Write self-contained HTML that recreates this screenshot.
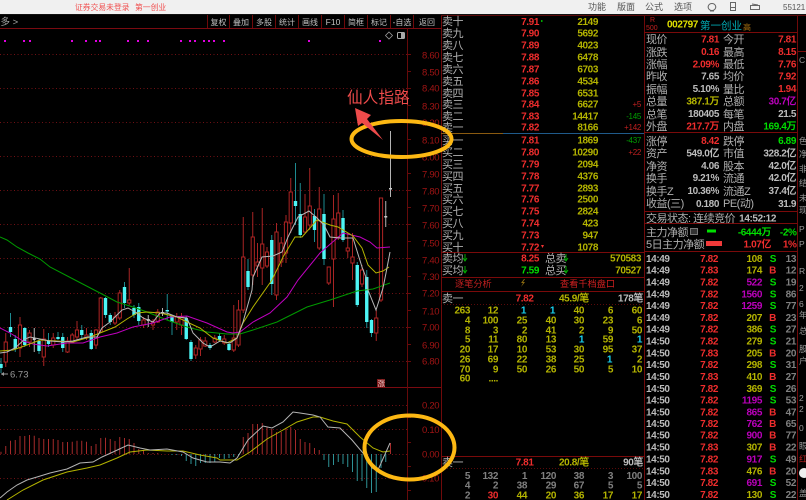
<!DOCTYPE html>
<html><head><meta charset="utf-8"><title>第一创业</title>
<style>
html,body{margin:0;padding:0;background:#000;width:806px;height:500px;overflow:hidden}
svg{display:block;filter:blur(.3px)}
text{font-family:"Liberation Sans","Noto Sans CJK SC",sans-serif}
.l{font-size:11px;fill:#b0b0b0;letter-spacing:-.5px}
.n{font-size:10px;font-weight:bold;letter-spacing:-.4px;text-anchor:end}
.s{text-anchor:start}
.ax{font-size:9.5px;fill:#a01414;letter-spacing:-.3px}
.r{fill:#ef2d2d}.y{fill:#b4b400}.w{fill:#bcbcbc}.g{fill:#00dd00}.p{fill:#bb00bb}.c{fill:#19cfee}.d{fill:#808080}
.t{font-size:8px;fill:#c0c0c0;text-anchor:middle}
.q{font-size:9px;fill:#555}
.de{font-size:8px;text-anchor:end;letter-spacing:-.3px}
.e{font-size:8.5px;fill:#999}
</style></head><body>
<svg width="806" height="500" viewBox="0 0 806 500" xmlns="http://www.w3.org/2000/svg">
<rect width="806" height="500" fill="#000"/>
<rect width="806" height="14" fill="#f0f0f0"/>
<text x="75" y="10" font-size="7.8" fill="#f05252">证券交易未登录</text>
<text x="135" y="10" font-size="7.8" fill="#f05252">第一创业</text>
<text x="588" y="10" class="q">功能</text><text x="617" y="10" class="q">版面</text><text x="645" y="10" class="q">公式</text><text x="674" y="10" class="q">选项</text>
<path d="M712 3.5a3.8 3.5 0 1 1-.1 0zM710 11h4" fill="none" stroke="#666"/>
<path d="M730.5 2.500h5v8h-5zM730.5 7.500h5" fill="none" stroke="#666"/>
<path d="M750.5 5.500h9v4h-9zM752 4l6 1" fill="none" stroke="#666"/>
<text x="783" y="10" font-size="8" fill="#555">55121</text>

<!-- frame lines -->
<path d="M0 14.500H806" stroke="#111"/>
<path d="M0 28.500H441M0 387.500H441" stroke="#7a0a10"/>
<path d="M207.500 15V28M229.500 15V28M252.500 15V28M275.500 15V28M298.500 15V28M321.500 15V28M344.500 15V28M367.500 15V28M390.500 15V28M413.500 15V28" stroke="#6e0a0a"/>
<text x="-9" y="25" font-size="9.500" fill="#aaa">型多 &gt;</text>
<g><text x="218.500" y="25" class="t">复权</text><text x="241" y="25" class="t">叠加</text><text x="264" y="25" class="t">多股</text><text x="287" y="25" class="t">统计</text><text x="310" y="25" class="t">画线</text><text x="333" y="25" class="t" style="font-size:8.5px">F10</text><text x="356" y="25" class="t">简框</text><text x="379" y="25" class="t">标记</text><text x="402" y="25" class="t">-自选</text><text x="427" y="25" class="t">返回</text></g>

<!-- chart grid -->
<path d="M0 54.500H407M0 88.500H407M0 122.500H407M0 156.500H407M0 190.500H407M0 224.500H407M0 258.500H407M0 293.500H407M0 327.500H407M0 361.500H407M0 405.500H407M0 429.500H407M0 454.500H407M0 478.500H407" stroke="#701014" stroke-dasharray="1 2.500" fill="none"/>
<path d="M407.500 28V500" stroke="#660a0a"/>
<path d="M408 54.500h3M408 71.500h3M408 88.500h3M408 105.500h3M408 122.500h3M408 139.500h3M408 156.500h3M408 173.500h3M408 190.500h3M408 207.500h3M408 224.500h3M408 241.500h3M408 258.500h3M408 276.500h3M408 293.500h3M408 310.500h3M408 327.500h3M408 344.500h3M408 361.500h3M408 417.500h3M408 442.500h3M408 466.500h3M408 490.500h3" stroke="#660a0a"/>
<g class="ax">
<text x="422" y="58.500">8.60</text><text x="422" y="75.500">8.50</text><text x="422" y="91.500">8.40</text><text x="422" y="109.500">8.30</text><text x="422" y="126">8.20</text><text x="422" y="143.500">8.10</text><text x="422" y="160.500">8.00</text><text x="422" y="177.500">7.90</text><text x="422" y="194.500">7.80</text><text x="422" y="211.500">7.70</text><text x="422" y="228.500">7.60</text><text x="422" y="246.500">7.50</text><text x="422" y="263.500">7.40</text><text x="422" y="280">7.30</text><text x="422" y="296.500">7.20</text><text x="422" y="314.500">7.10</text><text x="422" y="330.500">7.00</text><text x="422" y="348.500">6.90</text><text x="422" y="364.500">6.80</text>
<text x="422" y="408.500">0.20</text><text x="422" y="433">0.10</text><text x="422" y="457.500">0.00</text><text x="419" y="481.500">-0.10</text>
</g>

<!-- signal dots -->
<path d="M4 40h2v2h-2zM23 40h2v2h-2zM29 40h2v2h-2zM71 40h2v2h-2zM85 40h2v2h-2zM95 40h2v2h-2zM99 40h2v2h-2zM127 40h2v2h-2zM137 40h2v2h-2zM147 40h2v2h-2zM180 40h2v2h-2zM189 40h2v2h-2zM194 40h2v2h-2zM203 40h2v2h-2zM208 40h2v2h-2zM213 40h2v2h-2zM223 40h2v2h-2zM308 40h2v2h-2zM379 40h2v2h-2z" fill="#e000e0"/>
<path d="M389 32l3.500 3.500-3.500 3.500-3.500-3.500z" fill="none" stroke="#999" stroke-width=".8"/>
<rect x="397.500" y="32.500" width="7" height="6" rx="1" fill="none" stroke="#aaa"/><rect x="401" y="33" width="3" height="5" fill="#aaa"/>

<!-- wicks -->
<path fill="none" stroke="#a82424" d="M5.750 333V367M20 317V357M29.500 330V347M43.750 329V366M53.250 333V348M67.500 337V353M72.250 333V343M77 321V340M86.500 328V340M96 329V349M100.750 297V333M115 312V325M119.750 290V320M129.250 268V305M143.500 317V328M153 319V330M157.750 309V323M176.750 313V330M181.500 313V335M195.750 345V359M200.500 337V356M205.250 337V347M214.750 335V343M224.250 335V345M233.750 305V352M238.500 300V347M243.250 217V313M252.750 212V285M257.500 243V277M262.250 208V285M267 247V268M276.500 223V300M281.250 237V267M286 215V263M290.750 178V233M305 194V233M309.750 168V230M319.250 187V250M328.750 267V285M333.500 195V307M338.250 193V240M347.750 233V258M352.500 233V280M362 265V287M376.250 310V341M381 198V302"/>
<path fill="none" stroke="#1d8a90" d="M1 358V373M10.500 313V337M15.250 335V352M24.750 327V347M39 339V354M48.500 333V347M58 332V340M62.750 333V352M81.750 325V338M91.250 330V350M105.500 297V318M110.250 313V325M124.500 282V308M134 305V318M138.750 303V325M167.250 294V320M172 315V335M186.250 316V340M191 340V361M210 343V350M219.500 333V342M229 343V351M248 259V290M271.750 235V295M295.500 163V225M300.250 183V238M314.500 209V242M324 194V265M343 210V242M357.250 262V307M366.750 270V328M371.500 319V337"/>
<path fill="none" stroke="#b4b4b4" d="M34.250 328V352M148.250 315V327M162.500 308V316M385.750 201V227M390.500 131V197"/>
<!-- red hollow bodies -->
<path fill="#000" stroke="#b02424" stroke-width="1" d="M4.150 342h3.200v20h-3.200zM18.400 325h3.200v23h-3.200zM27.900 333h3.200v9h-3.200zM42.150 339h3.200v18h-3.200zM51.650 338h3.200v7h-3.200zM65.900 341h3.200v11h-3.200zM70.650 335h3.200v7h-3.200zM75.400 330h3.200v7h-3.200zM84.900 335h3.200v3h-3.200zM94.400 330h3.200v15h-3.200zM99.150 298h3.200v34h-3.200zM113.400 317h3.200v6h-3.200zM118.150 293h3.200v25h-3.200zM127.650 300h3.200v3h-3.200zM141.900 320h3.200v5h-3.200zM151.400 322h3.200v3h-3.200zM156.150 312h3.200v10h-3.200zM175.150 317h3.200v5h-3.200zM179.900 317h3.200v8h-3.200zM194.150 348h3.200v7h-3.200zM198.900 340h3.200v9h-3.200zM203.650 341h3.200v5h-3.200zM213.150 338h3.200v4h-3.200zM222.650 339h3.200v4h-3.200zM232.150 338h3.200v12h-3.200zM236.900 310h3.200v35h-3.200zM241.650 257h3.200v53h-3.200zM251.150 237h3.200v38h-3.200zM255.900 262h3.200v4h-3.200zM260.650 244h3.200v24h-3.200zM265.400 252h3.200v14h-3.200zM274.900 232h3.200v63h-3.200zM279.650 243h3.200v19h-3.200zM284.400 222h3.200v31h-3.200zM289.150 192h3.200v31h-3.200zM303.400 217h3.200v15h-3.200zM308.150 206h3.200v19h-3.200zM317.650 209h3.200v39h-3.200zM327.150 267h3.200v16h-3.200zM331.900 219h3.200v40h-3.200zM336.650 213h3.200v24h-3.200zM346.150 248h3.200v3h-3.200zM350.900 257h3.200v6h-3.200zM360.400 270h3.200v14h-3.200zM374.650 318h3.200v15h-3.200zM379.400 198h3.200v102h-3.200z"/>
<!-- cyan bodies -->
<path fill="none" stroke="#4df5f5" stroke-width="3.400" d="M1 364V368M10.500 327V332M15.250 339V349M24.750 328V345M39 341V351M48.500 341V344M58 337V339M62.750 337V348M81.750 330V335M91.250 333V349M105.500 298V315M110.250 315V322M124.500 287V303M134 308V315M138.750 307V321M167.250 310V311.500M172 316V322M186.250 318V339M191 342V359M210 345V348M219.500 336V340M229 344V350M248 271V287M271.750 240V284M295.500 201V206M300.250 214V235M314.500 216V230M324 214V259M343 218V240M357.250 265V305M366.750 277V322M371.500 320V333"/>
<path fill="none" stroke="#c8c8c8" stroke-width="3" d="M34.250 338V340M148.250 319V321M162.500 312V313M385.750 216V217.500M390.500 188V189.500"/>

<!-- MA lines -->
<g fill="none" stroke-width="1">
<polyline stroke="#009a00" points="0,237 7,240 17,247 28,253 40,259 50,267 75,280 100,293 117,302 133,307 147,312 167,320 187,327 207,332 227,334 240,334 253,330 277,322 307,307 330,300 357,291 373,289 390,283"/>
<polyline stroke="#c000c0" points="0,328 10,333 23,341 33,344 47,346 67,343 83,343 100,337 117,333 133,327 153,323 170,317 187,316 207,323 227,332 233,333 240,332 253,322 270,313 287,297 298,280 320,253 343,233 360,237 370,242 377,248 390,247"/>
<polyline stroke="#b4b400" points="0,351 13,350 27,345 40,340 57,341 73,342 90,337 100,333 115,327 127,319 137,313 147,312 160,313 177,317 187,322 200,328 213,338 227,343 237,338 243,323 253,307 272,280 283,257 295,237 302,237 317,220 330,225 338,227 353,236 362,248 368,265 376,273 383,271 389,267"/>
<polyline stroke="#b8b8b8" points="0,353 7,352 15,348 25,339 30,337 40,339 50,341 63,342 73,341 87,337 97,337 102,328 110,322 117,315 122,310 128,308 137,313 143,318 153,322 160,313 167,313 177,317 187,318 193,333 203,343 210,347 220,341 230,343 237,338 243,322 252,290 253,277 262,257 273,256 282,252 288,237 298,217 309,211 317,218 324,225 330,237 340,238 353,238 362,267 367,280 368,290 376,310 383,288 386,273 390,252"/>
</g>
<path d="M1 374h7" stroke="#999"/><path d="M1 374l3-2v4z" fill="#999"/>
<text x="10" y="377.500" font-size="9.500" fill="#999">6.73</text>
<rect x="377" y="379" width="8" height="8" fill="#7c1a1a"/><text x="377.500" y="385.800" font-size="7.500" fill="#e8c8c8">涨</text>

<!-- MACD hist -->
<path fill="none" stroke="#a62a2a" d="M1 454V451.700M5.750 454V446M10.500 454V440.700M15.250 454V440M20 454V436M24.750 454V436M29.500 454V435M34.250 454V435.700M39 454V438M43.750 454V439M48.500 454V439M53.250 454V439M58 454V440M62.750 454V442M67.500 454V442M72.250 454V441.700M77 454V440.700M81.750 454V440.700M86.500 454V441.700M91.250 454V446M96 454V444M100.750 454V438M105.500 454V437.700M110.250 454V439M115 454V441M119.750 454V437M124.500 454V438M129.250 454V439M134 454V443M138.750 454V449M143.500 454V450M148.250 454V453M153 454V453M157.750 454V453M243.250 454V437M248 454V433M252.750 454V424M257.500 454V424M262.250 454V423M267 454V427M271.750 454V429M276.500 454V432M281.250 454V432M286 454V428M290.750 454V427M295.500 454V430M300.250 454V439M305 454V442M309.750 454V443M314.500 454V448M319.250 454V450M390.500 454V443"/>
<path fill="none" stroke="#2e9296" d="M172 454V455M176.750 454V455M181.500 454V456M186.250 454V461M191 454V464M195.750 454V466M200.500 454V463M205.250 454V463M210 454V463M214.750 454V462M219.500 454V458M224.250 454V459M229 454V458M233.750 454V457M238.500 454V455M324 454V460M328.750 454V467M333.500 454V465M338.250 454V462M343 454V464M347.750 454V467M352.500 454V472M357.250 454V481M362 454V481M366.750 454V488M371.500 454V493M376.250 454V492M381 454V468M385.750 454V462"/>
<g fill="none">
<polyline stroke="#b4b400" points="7,500 23,490 43,480 67,472 87,468 100,465 117,458 130,452 147,450 167,451 183,451 200,455 217,458 220,460 237,460 250,452 267,439 283,430 297,422 313,417 320,417 333,421 347,424 360,437 373,448 383,452 390,451"/>
<polyline stroke="#b4b4b4" points="0,498 7,492 17,485 27,480 37,477 50,473 67,469 80,463 93,462 102,457 113,452 128,445 140,448 150,450 167,449 183,452 193,458 207,462 220,462 230,463 237,458 248,440 263,426 272,428 283,422 293,412 300,413 313,415 320,417 328,427 340,428 352,440 363,453 372,468 378,470 390,443"/>
</g>

<!-- panel lines -->
<path d="M441.500 15V500M644.500 15V500M797.500 15V500" stroke="#700a0a"/>
<path d="M441 15.500H806" stroke="#5a0a0a"/>
<path d="M441 133.500H503" stroke="#8a5a10"/><path d="M503 133.500H644" stroke="#1f5a8a"/>
<path d="M441 252.500H644M441 277.500H644M441 291.500H644M441 456.500H644M644 32.500H797M644 132.500H797M644 211.500H797M644 223.500H797M644 251.500H797M798 51.500H806" stroke="#7a0a0a"/>
<path d="M441 304.500H644M441 468.500H644" stroke="#5a0a0a" stroke-dasharray="1 2"/>

<!-- order book sell -->
<g class="l">
<text x="442" y="25">卖十</text><text x="442" y="37">卖九</text><text x="442" y="49">卖八</text><text x="442" y="61">卖七</text><text x="442" y="73">卖六</text><text x="442" y="85">卖五</text><text x="442" y="97">卖四</text><text x="442" y="108">卖三</text><text x="442" y="120">卖二</text><text x="442" y="131">卖一</text>
<text x="442" y="144">买一</text><text x="442" y="156">买二</text><text x="442" y="168">买三</text><text x="442" y="180">买四</text><text x="442" y="192">买五</text><text x="442" y="203">买六</text><text x="442" y="215">买七</text><text x="442" y="227">买八</text><text x="442" y="239">买九</text><text x="442" y="251">买十</text>
<text x="442" y="262">卖均</text><text x="442" y="274">买均</text><text x="545" y="262">总卖</text><text x="545" y="274">总买</text>
<text x="442" y="302">卖一</text><text x="442" y="466">卖一</text>
</g>
<g class="n r">
<text x="539" y="25">7.91</text><text x="539" y="36.500">7.90</text><text x="539" y="48.500">7.89</text><text x="539" y="60.500">7.88</text><text x="539" y="72.500">7.87</text><text x="539" y="84.500">7.86</text><text x="539" y="96.500">7.85</text><text x="539" y="107.500">7.84</text><text x="539" y="119.500">7.83</text><text x="539" y="130.500">7.82</text>
<text x="539" y="143.500">7.81</text><text x="539" y="155.500">7.80</text><text x="539" y="167.500">7.79</text><text x="539" y="179.500">7.78</text><text x="539" y="191.500">7.77</text><text x="539" y="202.500">7.76</text><text x="539" y="214.500">7.75</text><text x="539" y="226.500">7.74</text><text x="539" y="238.500">7.73</text><text x="539" y="250.500">7.72</text>
<text x="539" y="261.500">8.25</text><text x="533.500" y="301.500">7.82</text><text x="533.500" y="465.500">7.81</text>
</g>
<text x="539" y="273.500" class="n g">7.59</text>
<g class="n y">
<text x="598" y="25">2149</text><text x="598" y="36.500">5692</text><text x="598" y="48.500">4023</text><text x="598" y="60.500">6478</text><text x="598" y="72.500">6703</text><text x="598" y="84.500">4534</text><text x="598" y="96.500">6531</text><text x="598" y="107.500">6627</text><text x="598" y="119.500">14417</text><text x="598" y="130.500">8166</text>
<text x="598" y="143.500">1869</text><text x="598" y="155.500">10290</text><text x="598" y="167.500">2094</text><text x="598" y="179.500">4376</text><text x="598" y="191.500">2893</text><text x="598" y="202.500">2500</text><text x="598" y="214.500">2824</text><text x="598" y="226.500">423</text><text x="598" y="238.500">947</text><text x="598" y="250.500">1078</text>
<text x="641" y="261.500">570583</text><text x="641" y="273.500">70527</text>
</g>
<g class="de">
<text x="641" y="107" fill="#c02020">+5</text><text x="641" y="119" fill="#00a000">-145</text><text x="641" y="130" fill="#c02020">+142</text><text x="641" y="143" fill="#00a000">-437</text><text x="641" y="155" fill="#c02020">+22</text>
</g>
<rect x="541" y="20" width="1.500" height="2" fill="#0a0"/><path d="M541 245h3l-1.500 3z" fill="#e33"/>
<path d="M465 254v6M463 258l2 3 2-3M465 266v6M463 270l2 3 2-3M566 254v6M564 258l2 3 2-3M566 266v6M564 270l2 3 2-3" stroke="#0a0" fill="none"/>
<text x="455" y="287" font-size="9.200" fill="#c42020">逐笔分析</text>
<text x="560" y="287" font-size="9.200" fill="#d02020">查看千档盘口</text>
<path d="M524 279l-3 4h2l-2 4 4-5h-2l2-3z" fill="#8a6a10"/>
<g class="n y s"><text x="559" y="301.500">45.9/笔</text><text x="559" y="465.500">20.8/笔</text></g>
<g class="n w"><text x="643" y="301.500">178笔</text><text x="643" y="465.500">90笔</text></g>

<!-- tick grid -->
<g class="n y">
<text x="470" y="313.500">263</text><text x="498" y="313.500">12</text><text x="584" y="313.500">40</text><text x="613" y="313.500">6</text><text x="642" y="313.500">60</text>
<text x="470" y="323.500">4</text><text x="498" y="323.500">100</text><text x="527" y="323.500">25</text><text x="556" y="323.500">40</text><text x="584" y="323.500">30</text><text x="613" y="323.500">23</text><text x="642" y="323.500">6</text>
<text x="470" y="333.500">8</text><text x="498" y="333.500">3</text><text x="527" y="333.500">2</text><text x="556" y="333.500">41</text><text x="584" y="333.500">2</text><text x="613" y="333.500">9</text><text x="642" y="333.500">50</text>
<text x="470" y="342.500">5</text><text x="498" y="342.500">11</text><text x="527" y="342.500">80</text><text x="556" y="342.500">13</text><text x="613" y="342.500">59</text>
<text x="470" y="352.500">20</text><text x="498" y="352.500">17</text><text x="527" y="352.500">10</text><text x="556" y="352.500">53</text><text x="584" y="352.500">30</text><text x="613" y="352.500">95</text><text x="642" y="352.500">37</text>
<text x="470" y="362.500">26</text><text x="498" y="362.500">69</text><text x="527" y="362.500">22</text><text x="556" y="362.500">38</text><text x="584" y="362.500">25</text><text x="642" y="362.500">2</text>
<text x="470" y="372.500">70</text><text x="498" y="372.500">9</text><text x="527" y="372.500">50</text><text x="556" y="372.500">26</text><text x="584" y="372.500">50</text><text x="613" y="372.500">5</text><text x="642" y="372.500">10</text>
<text x="470" y="381.500">60</text><text x="498" y="381.500">....</text>
</g>
<g class="n c"><text x="526" y="313.500">1</text><text x="555" y="313.500">1</text><text x="584" y="342.500">1</text><text x="642" y="342.500">1</text><text x="612" y="362.500">1</text></g>
<g class="n d">
<text x="470" y="479">5</text><text x="498" y="479">132</text><text x="527" y="479">1</text><text x="556" y="479">120</text><text x="584" y="479">38</text><text x="613" y="479">3</text><text x="642" y="479">100</text>
<text x="470" y="488.500">4</text><text x="498" y="488.500">2</text><text x="527" y="488.500">38</text><text x="556" y="488.500">29</text><text x="584" y="488.500">67</text><text x="613" y="488.500">5</text><text x="642" y="488.500">5</text>
</g>
<g class="n y"><text x="470" y="498.300" class="d">2</text><text x="498" y="498.300" class="r">30</text><text x="527" y="498.300">44</text><text x="556" y="498.300">20</text><text x="584" y="498.300">36</text><text x="613" y="498.300">17</text><text x="642" y="498.300">17</text></g>

<!-- stock info -->
<text x="650" y="22" font-size="7" fill="#c02020">R</text><text x="646" y="30" font-size="7" fill="#c02020">500</text>
<text x="667" y="27.500" font-size="10" font-weight="bold" fill="#e0e000" letter-spacing="-.4">002797</text>
<text x="700" y="29" font-size="10.500" fill="#00aab4">第一创业</text>
<text x="743" y="30" font-size="8" fill="#a87010">高</text>
<g class="l">
<text x="646" y="43">现价</text><text x="646" y="56">涨跌</text><text x="646" y="68">涨幅</text><text x="646" y="80">昨收</text><text x="646" y="93">振幅</text><text x="646" y="105">总量</text><text x="646" y="118">总笔</text><text x="646" y="130">外盘</text>
<text x="723" y="43">今开</text><text x="723" y="56">最高</text><text x="723" y="68">最低</text><text x="723" y="80">均价</text><text x="723" y="93">量比</text><text x="723" y="105">总额</text><text x="723" y="118">每笔</text><text x="723" y="130">内盘</text>
<text x="646" y="145">涨停</text><text x="646" y="157">资产</text><text x="646" y="170">净资</text><text x="646" y="182">换手</text><text x="646" y="195">换手Z</text><text x="646" y="207">收益(三)</text>
<text x="723" y="145">跌停</text><text x="723" y="157">市值</text><text x="723" y="170">股本</text><text x="723" y="182">流通</text><text x="723" y="195">流通Z</text><text x="723" y="207">PE(动)</text>
<text x="646" y="222">交易状态: 连续竞价</text><text x="646" y="236">主力净额</text><text x="646" y="248">5日主力净额</text>
</g>
<g class="n r">
<text x="719" y="42.500">7.81</text><text x="719" y="55">0.16</text><text x="719" y="67.500">2.09%</text><text x="719" y="129.500">217.7万</text><text x="719" y="144">8.42</text>
<text x="796" y="42.500">7.81</text><text x="796" y="55">8.15</text><text x="796" y="67.500">7.76</text><text x="796" y="79.500">7.92</text><text x="796" y="92">1.94</text>
<text x="771" y="247.500">1.07亿</text><text x="796.500" y="247.500">1%</text>
</g>
<g class="n w">
<text x="719" y="79.500">7.65</text><text x="719" y="92">5.10%</text><text x="719" y="117">180405</text><text x="796" y="117">21.5</text>
<text x="719" y="156.500">549.0亿</text><text x="719" y="169">4.06</text><text x="719" y="181">9.21%</text><text x="719" y="194">10.36%</text><text x="719" y="207">0.180</text>
<text x="796" y="156.500">328.2亿</text><text x="796" y="169">42.0亿</text><text x="796" y="181">42.0亿</text><text x="796" y="194">37.4亿</text><text x="796" y="207">31.9</text>
<text x="776" y="221.500">14:52:12</text>
</g>
<text x="719" y="104.500" class="n y">387.1万</text>
<text x="796" y="104.500" class="n p">30.7亿</text>
<g class="n g"><text x="796" y="129.500">169.4万</text><text x="796" y="144">6.89</text><text x="771" y="235.500">-6444万</text><text x="796.500" y="235.500">-2%</text></g>
<rect x="690.500" y="228.500" width="7" height="6" fill="#333" stroke="#777"/>
<rect x="707" y="229.500" width="9" height="3" fill="#00e000"/>
<rect x="706" y="241" width="16" height="5" fill="#f03a3a"/>

<!-- ticks -->
<g class="n w">
<text x="646" y="262" class="s">14:49</text><text x="646" y="273.700" class="s">14:49</text><text x="646" y="285.500" class="s">14:49</text><text x="646" y="297.300" class="s">14:49</text><text x="646" y="309.100" class="s">14:49</text><text x="646" y="320.900" class="s">14:49</text><text x="646" y="332.700" class="s">14:49</text><text x="646" y="344.500" class="s">14:50</text><text x="646" y="356.300" class="s">14:50</text><text x="646" y="368.100" class="s">14:50</text><text x="646" y="379.900" class="s">14:50</text><text x="646" y="391.900" class="s">14:50</text><text x="646" y="403.600" class="s">14:50</text><text x="646" y="415.300" class="s">14:50</text><text x="646" y="426.900" class="s">14:50</text><text x="646" y="438.600" class="s">14:50</text><text x="646" y="450.300" class="s">14:50</text><text x="646" y="462.300" class="s">14:50</text><text x="646" y="474.300" class="s">14:50</text><text x="646" y="485.900" class="s">14:50</text><text x="646" y="497.900" class="s">14:50</text>
</g>
<g class="n r">
<text x="718" y="262">7.82</text><text x="718" y="273.700">7.83</text><text x="718" y="285.500">7.82</text><text x="718" y="297.300">7.82</text><text x="718" y="309.100">7.82</text><text x="718" y="320.900">7.82</text><text x="718" y="332.700">7.82</text><text x="718" y="344.500">7.82</text><text x="718" y="356.300">7.83</text><text x="718" y="368.100">7.82</text><text x="718" y="379.900">7.83</text><text x="718" y="391.900">7.82</text><text x="718" y="403.600">7.82</text><text x="718" y="415.300">7.82</text><text x="718" y="426.900">7.82</text><text x="718" y="438.600">7.82</text><text x="718" y="450.300">7.83</text><text x="718" y="462.300">7.82</text><text x="718" y="474.300">7.83</text><text x="718" y="485.900">7.82</text><text x="718" y="497.900">7.82</text>
</g>
<g class="n y">
<text x="762" y="262">108</text><text x="762" y="273.700">174</text><text x="762" y="320.900">207</text><text x="762" y="332.700">386</text><text x="762" y="344.500">279</text><text x="762" y="356.300">205</text><text x="762" y="368.100">298</text><text x="762" y="379.900">410</text><text x="762" y="391.900">369</text><text x="762" y="450.300">307</text><text x="762" y="474.300">476</text><text x="762" y="497.900">130</text>
</g>
<g class="n p">
<text x="762" y="285.500">522</text><text x="762" y="297.300">1560</text><text x="762" y="309.100">1259</text><text x="762" y="403.600">1195</text><text x="762" y="415.300">865</text><text x="762" y="426.900">762</text><text x="762" y="438.600">900</text><text x="762" y="462.300">917</text><text x="762" y="485.900">691</text>
</g>
<g class="n g">
<text x="776" y="262">S</text><text x="776" y="285.500">S</text><text x="776" y="297.300">S</text><text x="776" y="309.100">S</text><text x="776" y="332.700">S</text><text x="776" y="344.500">S</text><text x="776" y="368.100">S</text><text x="776" y="391.900">S</text><text x="776" y="403.600">S</text><text x="776" y="462.300">S</text><text x="776" y="485.900">S</text><text x="776" y="497.900">S</text>
</g>
<g class="n r">
<text x="776" y="273.700">B</text><text x="776" y="320.900">B</text><text x="776" y="356.300">B</text><text x="776" y="379.900">B</text><text x="776" y="415.300">B</text><text x="776" y="426.900">B</text><text x="776" y="438.600">B</text><text x="776" y="450.300">B</text><text x="776" y="474.300">B</text>
</g>
<g class="n d">
<text x="796" y="262">13</text><text x="796" y="273.700">12</text><text x="796" y="285.500">19</text><text x="796" y="297.300">86</text><text x="796" y="309.100">77</text><text x="796" y="320.900">23</text><text x="796" y="332.700">27</text><text x="796" y="344.500">21</text><text x="796" y="356.300">20</text><text x="796" y="368.100">31</text><text x="796" y="379.900">27</text><text x="796" y="391.900">26</text><text x="796" y="403.600">53</text><text x="796" y="415.300">47</text><text x="796" y="426.900">65</text><text x="796" y="438.600">77</text><text x="796" y="450.300">22</text><text x="796" y="462.300">49</text><text x="796" y="474.300">20</text><text x="796" y="485.900">52</text><text x="796" y="497.900">22</text>
</g>

<!-- right cut-off strip -->
<g class="e">
<text x="799" y="63">C</text><text x="799" y="144">色</text><text x="799" y="157">净</text><text x="799" y="172">非</text><text x="799" y="186">结</text><text x="799" y="201">未</text><text x="799" y="213">现</text><text x="799" y="232">P</text><text x="799" y="247">P</text><text x="799" y="274">R</text><text x="799" y="291">2</text><text x="799" y="307">6</text><text x="799" y="318">年</text><text x="799" y="334">总</text><text x="799" y="352">股</text><text x="799" y="364">户</text><text x="799" y="401">2</text><text x="799" y="412">2</text><text x="799" y="431">0</text><text x="799" y="449">眼</text><text x="799" y="496">盖</text>
</g>
<text x="799" y="462" font-size="8.500" fill="#c02020">红</text>
<circle cx="804" cy="473" r="5" fill="#eee"/>

<!-- annotations -->
<ellipse cx="401.500" cy="139" rx="50" ry="18" fill="none" stroke="#fdb813" stroke-width="4"/>
<ellipse cx="409.500" cy="447.500" rx="45" ry="32" fill="none" stroke="#fdb813" stroke-width="4"/>
<text x="347" y="103" font-size="15.700" fill="#ee4b4b">仙人指路</text>
<path d="M355 108l16 7-4 4 16 21-21-17-4 3z" fill="#ee4b4b"/>
</svg>
</body></html>
